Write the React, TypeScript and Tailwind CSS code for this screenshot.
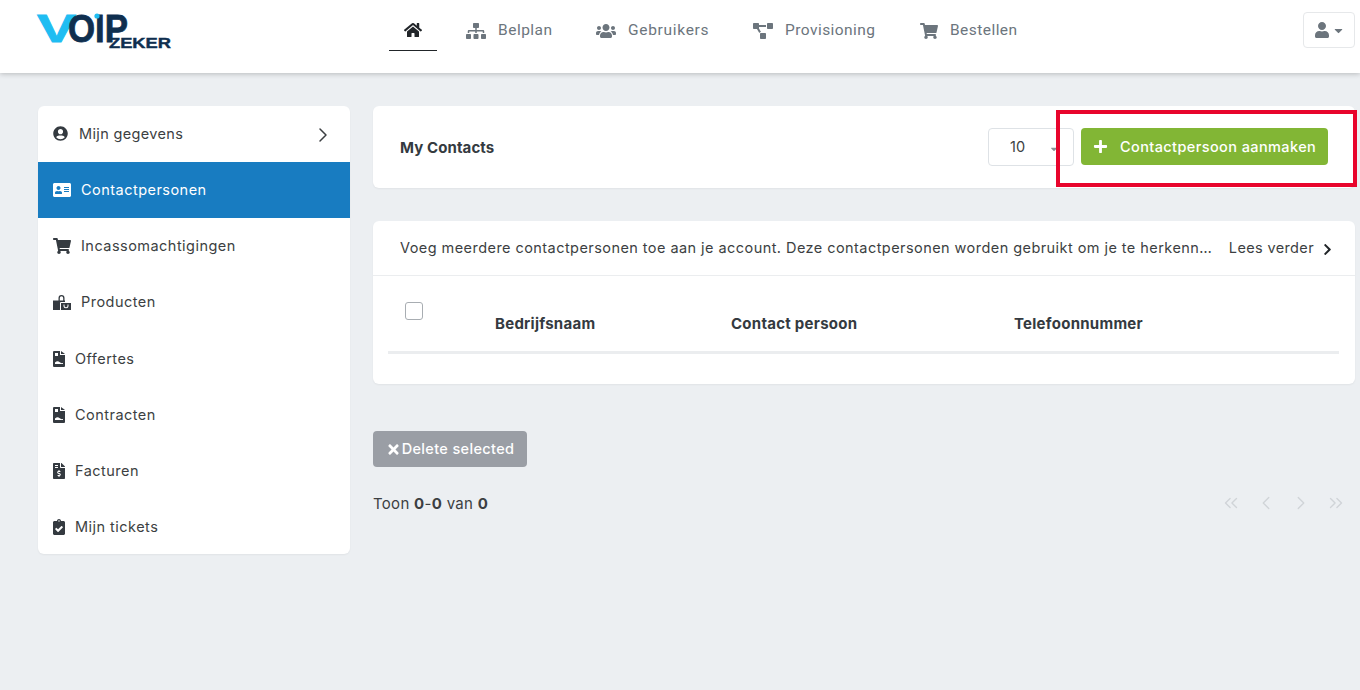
import type { ReactNode } from 'react'
import {
  FaAddressCard,
  FaCaretDown,
  FaChevronRight,
  FaClipboardCheck,
  FaFileInvoiceDollar,
  FaHome,
  FaPlus,
  FaProjectDiagram,
  FaShoppingCart,
  FaSitemap,
  FaTimes,
  FaUser,
  FaUserCircle,
  FaUsers,
} from 'react-icons/fa'
import { ChevronLeft, ChevronRight, ChevronsLeft, ChevronsRight } from 'lucide-react'

type SideItem = { label: string; icon: ReactNode; active?: boolean; rowClass: string; textClass: string }

function BagIcon() {
  return (
    <svg width="18" height="15" viewBox="0 0 18 15" fill="currentColor">
      <path d="M0 5.5h5.5V3a3 3 0 0 1 6 0v2.5h-1.3V3a1.7 1.7 0 0 0-3.4 0v2.5H12V7H8a1 1 0 0 0-1 1v7H0z" />
      <path fillRule="evenodd" d="M8 8h10v7H8zM10.5 9.5v1.2a2.5 2.5 0 0 0 5 0V9.5h-1v1.2a1.5 1.5 0 0 1-3 0V9.5z" />
    </svg>
  )
}

function FileIcon() {
  return (
    <svg width="12" height="16" viewBox="0 0 12 16" fill="currentColor">
      <path
        fillRule="evenodd"
        d="M0 1a1 1 0 0 1 1-1h6v4h5v11a1 1 0 0 1-1 1H1a1 1 0 0 1-1-1zM2 2v3h3V2zM2 11.5v1.5h8v-1c-2 .6-3-.8-4.500-1.500-1.200-.5-2.400.2-3.500 1z"
      />
      <path d="M8 0l4 3H8z" />
    </svg>
  )
}

const SIDE_ITEMS: SideItem[] = [
  { label: 'Contactpersonen', icon: <FaAddressCard size={18} />, active: true, rowClass: '', textClass: 'ml-[10px]' },
  { label: 'Incassomachtigingen', icon: <FaShoppingCart size={18} />, rowClass: '', textClass: 'ml-[10px]' },
  { label: 'Producten', icon: <BagIcon />, rowClass: '', textClass: 'ml-[10px]' },
  { label: 'Offertes', icon: <FileIcon />, rowClass: 'pt-[1px]', textClass: 'ml-[10px]' },
  { label: 'Contracten', icon: <FileIcon />, rowClass: 'pt-[1px]', textClass: 'ml-[10px]' },
  { label: 'Facturen', icon: <FaFileInvoiceDollar className="h-[16px] w-[12px]" />, rowClass: 'pt-[1px]', textClass: 'ml-[10px]' },
  { label: 'Mijn tickets', icon: <FaClipboardCheck className="h-[16px] w-[12px]" />, rowClass: 'pt-[1px]', textClass: 'ml-[10px]' },
]

const NAV_ITEMS = [
  { label: 'Belplan', icon: <FaSitemap size={20} />, width: 'w-[130px]', track: 'tracking-[0.5px]' },
  { label: 'Gebruikers', icon: <FaUsers size={20} />, width: 'w-[157px]', track: 'tracking-[0.7px]' },
  { label: 'Provisioning', icon: <FaProjectDiagram size={20} />, width: 'w-[167px]', track: 'tracking-[0.45px]' },
  { label: 'Bestellen', icon: <FaShoppingCart size={18} />, width: 'w-auto', track: 'tracking-[0.45px]' },
]

function Logo() {
  return (
    <svg width="136" height="40" viewBox="0 0 136 40" className="block overflow-visible">
      <text x="-1" y="29" fontFamily="Liberation Sans" fontWeight="700" fontSize="39" fill="#1fbdf2" stroke="#1fbdf2" strokeWidth="0.8" textLength="39" lengthAdjust="spacingAndGlyphs">
        V
      </text>
      <text x="30" y="29" fontFamily="Liberation Sans" fontWeight="700" fontSize="39" fill="#0f2f4f" stroke="#0f2f4f" strokeWidth="0.8" textLength="60" lengthAdjust="spacingAndGlyphs">
        OIP
      </text>
      <circle cx="59" cy="3" r="2.6" fill="#1fbdf2" />
      <text x="71" y="35" fontFamily="Liberation Sans" fontWeight="700" fontSize="15" fill="#0f2f4f" stroke="#0f2f4f" strokeWidth="0.4" textLength="62" lengthAdjust="spacingAndGlyphs">
        ZEKER
      </text>
    </svg>
  )
}

export default function App() {
  return (
    <div className="relative h-[690px] overflow-hidden bg-[#eceff2] font-['Inter',sans-serif] text-[#3c3f42]">
      <header className="flex h-[73px] items-start bg-white shadow-[0_1px_5px_rgba(0,0,0,0.22)]">
        <div className="ml-[38px] mt-[13px] w-[351px] shrink-0">
          <Logo />
        </div>
        <nav className="flex items-start font-['Roboto',sans-serif] text-[15.5px] text-[#6c757d]">
          <div className="mr-[29px] flex h-[51px] w-[48px] items-center justify-center border-b border-[#212529] pt-[10px] text-[#212529]">
            <FaHome size={18} />
          </div>
          {NAV_ITEMS.map(item => (
            <div key={item.label} className={`flex h-[51px] items-center gap-[12px] pt-[10px] ${item.width}`}>
              {item.icon}
              <span className={item.track}>{item.label}</span>
            </div>
          ))}
        </nav>
        <div className="ml-auto mr-[5px] mt-[12px] flex h-[36px] w-[52px] items-center justify-center gap-[2px] rounded border border-[#e6e8ea] text-[#6c757d]">
          <FaUser size={16} />
          <FaCaretDown size={13} />
        </div>
      </header>

      <div className="flex items-start gap-[23px] pl-[38px] pr-[5px] pt-[33px]">
        <aside className="w-[312px] shrink-0 overflow-hidden rounded-md bg-white text-[14.5px] shadow-[0_1px_2px_rgba(0,0,0,0.05)]">
          <div className="flex h-[56px] items-center pb-[1px] pl-[15px] pr-[15px]">
            <FaUserCircle size={15} className="text-[#343a40]" />
            <span className="ml-[11px] tracking-[0.35px]">Mijn gegevens</span>
            <ChevronRight size={24} strokeWidth={1.5} className="ml-auto mt-[3px]" />
          </div>
          {SIDE_ITEMS.map(item => (
            <div
              key={item.label}
              className={`flex h-[56px] items-center pl-[15px] ${item.rowClass} ${item.active ? 'bg-[#187cc1] text-white' : ''}`}
            >
              <span className={item.active ? 'text-white' : 'text-[#343a40]'}>{item.icon}</span>
              <span className={`tracking-[0.47px] ${item.textClass}`}>{item.label}</span>
            </div>
          ))}
        </aside>

        <main className="min-w-0 flex-1">
          <section className="flex h-[82px] items-center rounded-md bg-white pl-[27px] pr-[27px] shadow-[0_1px_2px_rgba(0,0,0,0.05)]">
            <h2 className="pt-[3px] text-[15px] font-bold tracking-[0.1px] text-[#343a40]">My Contacts</h2>
            <div className="relative ml-auto flex h-[38px] w-[86px] items-center rounded border border-[#dee2e6] pl-[21px] text-[14.5px] tracking-[0.2px]">
              10
              <FaCaretDown size={10} className="absolute right-[14px] top-[15px] text-[#8a9095]" />
            </div>
            <button className="mb-[1px] ml-[7px] flex h-[37px] w-[247px] items-center rounded bg-[#82b635] pl-[12px] text-[14.5px] font-medium tracking-[0.4px] text-white">
              <FaPlus size={15} />
              <span className="ml-[12px]">Contactpersoon aanmaken</span>
            </button>
          </section>

          <section className="mt-[33px] h-[163px] rounded-md bg-white shadow-[0_1px_2px_rgba(0,0,0,0.05)]">
            <div className="flex h-[55px] items-center border-b border-[#ebedef] pl-[27px] pr-[21px] text-[14.5px]">
              <span className="min-w-0 flex-1 truncate tracking-[0.44px]">
                Voeg meerdere contactpersonen toe aan je account. Deze contactpersonen worden gebruikt om je te herkenn...
              </span>
              <span className="ml-[16px] tracking-[0.36px]">Lees verder</span>
              <FaChevronRight size={13} className="ml-[7px] mt-[2px] text-[#212529]" />
            </div>
            <div className="ml-[15px] mr-[16px] flex h-[78px] items-center border-b-[3px] border-[#ebedef] text-[15px] font-bold tracking-[0.26px] text-[#343a40]">
              <span className="mb-[6px] ml-[17px] h-[18px] w-[18px] rounded-[3px] border border-[#a8adb2] bg-white" />
              <span className="ml-[72px] mt-[22px] w-[236px]">Bedrijfsnaam</span>
              <span className="mt-[22px] w-[283px]">Contact persoon</span>
              <span className="mt-[22px]">Telefoonnummer</span>
            </div>
          </section>

          <button className="mt-[47px] flex h-[36px] w-[154px] items-center justify-center gap-[1px] rounded bg-[#9a9ea5] text-[14.5px] font-medium tracking-[0.35px] text-white">
            <FaTimes size={15} />
            Delete selected
          </button>

          <div className="mt-[25px] flex items-center">
            <p className="text-[15px] tracking-[0.3px]">
              Toon <b>0</b>-<b>0</b> van <b>0</b>
            </p>
            <div className="ml-auto mb-[3px] flex items-center gap-[13px] pr-[8px] text-[#d0d4d8]">
              <ChevronsLeft size={22} strokeWidth={1.5} />
              <ChevronLeft size={22} strokeWidth={1.5} />
              <ChevronRight size={22} strokeWidth={1.5} />
              <ChevronsRight size={22} strokeWidth={1.5} />
            </div>
          </div>
        </main>
      </div>

      {/* annotation over the screenshot */}
      <div className="pointer-events-none absolute left-[1056px] top-[110px] h-[77px] w-[301px] border-[4px] border-[#e8042c]" />
    </div>
  )
}
